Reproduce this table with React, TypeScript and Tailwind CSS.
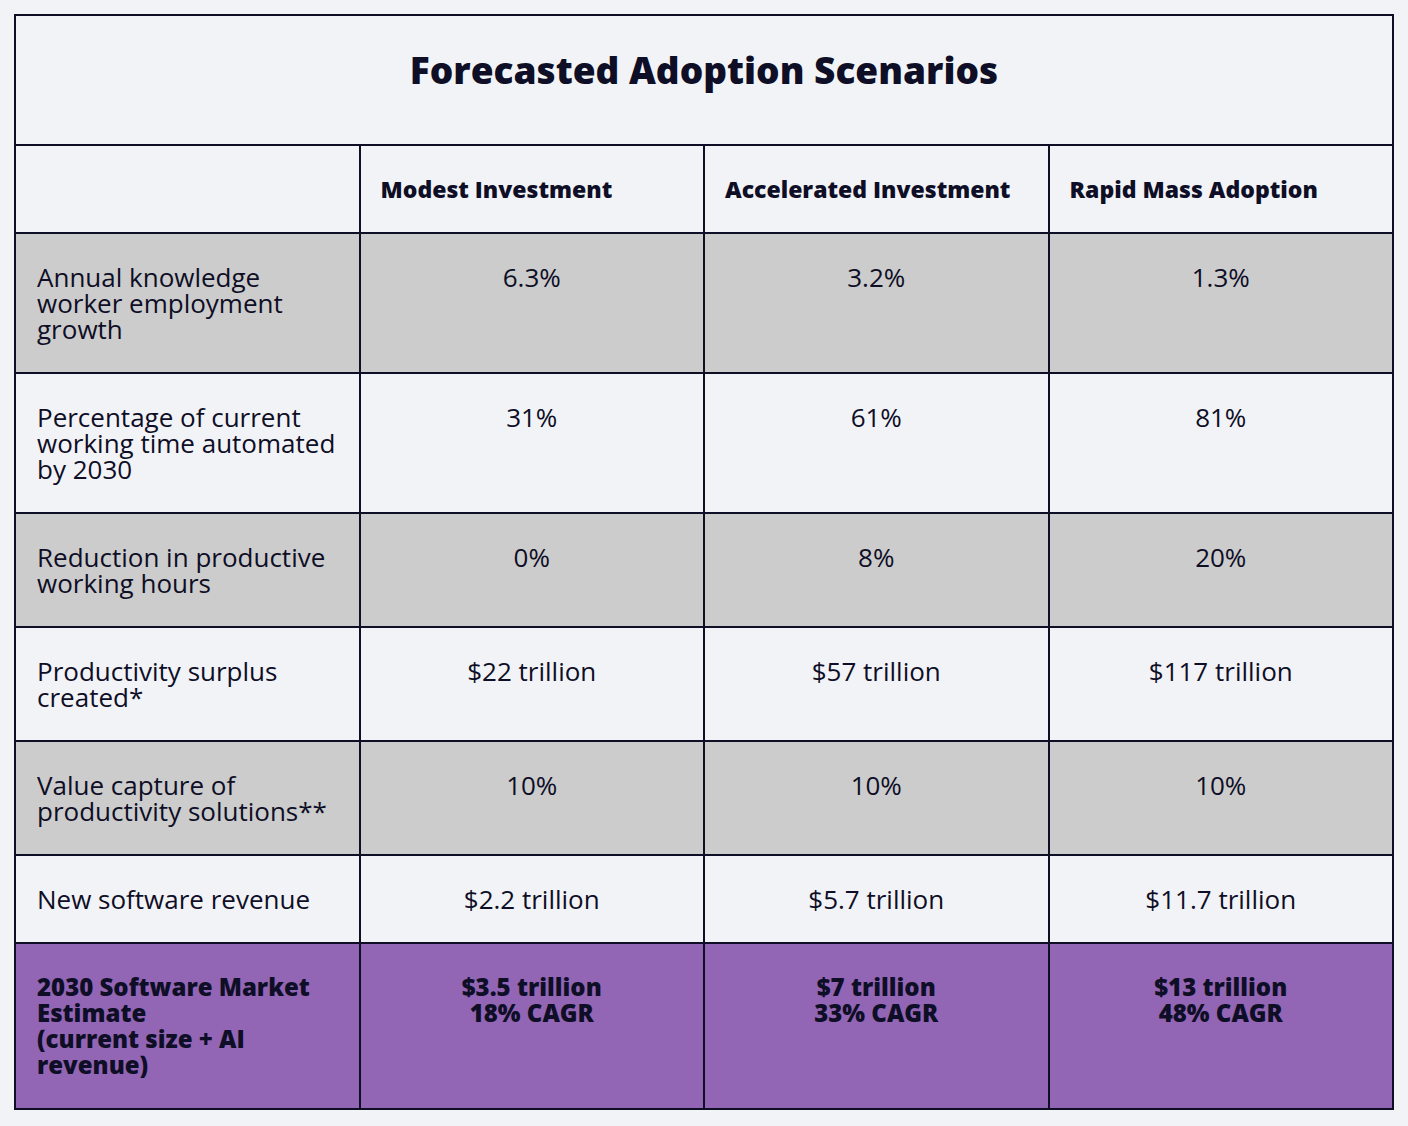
import React from "react";

type Row = {
  label: string[];
  values: string[][];
  tone: "gray" | "light" | "purple";
};

const rows: Row[] = [
  {
    label: ["Annual knowledge", "worker employment", "growth"],
    values: [["6.3%"], ["3.2%"], ["1.3%"]],
    tone: "gray",
  },
  {
    label: ["Percentage of current", "working time automated", "by 2030"],
    values: [["31%"], ["61%"], ["81%"]],
    tone: "light",
  },
  {
    label: ["Reduction in productive", "working hours"],
    values: [["0%"], ["8%"], ["20%"]],
    tone: "gray",
  },
  {
    label: ["Productivity surplus", "created*"],
    values: [["$22 trillion"], ["$57 trillion"], ["$117 trillion"]],
    tone: "light",
  },
  {
    label: ["Value capture of", "productivity solutions**"],
    values: [["10%"], ["10%"], ["10%"]],
    tone: "gray",
  },
  {
    label: ["New software revenue"],
    values: [["$2.2 trillion"], ["$5.7 trillion"], ["$11.7 trillion"]],
    tone: "light",
  },
  {
    label: ["2030 Software Market", "Estimate", "(current size + AI", "revenue)"],
    values: [
      ["$3.5 trillion", "18% CAGR"],
      ["$7 trillion", "33% CAGR"],
      ["$13 trillion", "48% CAGR"],
    ],
    tone: "purple",
  },
];

const toneClass = {
  gray: "bg-[#cccccc] text-[26px]",
  light: "bg-[#f2f3f7] text-[26px]",
  purple: "bg-[#9265b5] text-[24px] font-extrabold",
};

const headers = ["Modest Investment", "Accelerated Investment", "Rapid Mass Adoption"];

export default function App() {
  return (
    <div className="min-h-screen bg-[#f2f3f7] p-[14px] text-[#0e0e26] font-['Open_Sans',sans-serif]">
      <table className="w-[1380px] table-fixed border-collapse border-2 border-[#0e0e26]">
        <thead>
          <tr>
            <th
              colSpan={4}
              className="border-2 border-[#0e0e26] pt-[30px] pb-[50px] text-center text-[37px] leading-[48px] font-extrabold"
            >
              Forecasted Adoption Scenarios
            </th>
          </tr>
          <tr className="h-[88px]">
            <th className="border-2 border-[#0e0e26]" />
            {headers.map((h) => (
              <th
                key={h}
                className="border-2 border-[#0e0e26] px-[20px] text-left align-middle text-[23px] leading-[26px] font-extrabold whitespace-nowrap"
              >
                {h}
              </th>
            ))}
          </tr>
        </thead>
        <tbody>
          {rows.map((row, i) => (
            <tr key={i} className={toneClass[row.tone]}>
              <td className="border-2 border-[#0e0e26] pl-[21px] pr-[4px] pt-[30px] pb-[30px] align-top leading-[26px] whitespace-nowrap">
                {row.label.map((line) => (
                  <div key={line}>{line}</div>
                ))}
              </td>
              {row.values.map((v, j) => (
                <td
                  key={j}
                  className="border-2 border-[#0e0e26] px-[21px] pt-[30px] pb-[30px] align-top text-center leading-[26px]"
                >
                  {v.map((line) => (
                    <div key={line}>{line}</div>
                  ))}
                </td>
              ))}
            </tr>
          ))}
        </tbody>
      </table>
    </div>
  );
}
